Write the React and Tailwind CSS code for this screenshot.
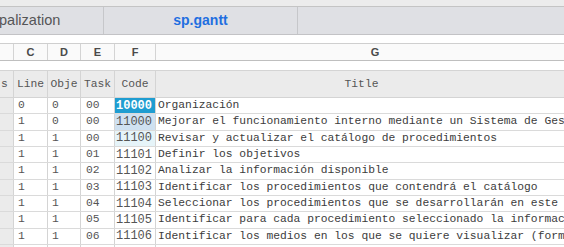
import React from "react";

const rows = [
  { l: "0", o: "0", t: "00", c: "10000", title: "Organización", hl: 1 },
  { l: "1", o: "0", t: "00", c: "11000", title: "Mejorar el funcionamiento interno mediante un Sistema de Ges", hl: 2 },
  { l: "1", o: "1", t: "00", c: "11100", title: "Revisar y actualizar el catálogo de procedimientos", hl: 3 },
  { l: "1", o: "1", t: "01", c: "11101", title: "Definir los objetivos" },
  { l: "1", o: "1", t: "02", c: "11102", title: "Analizar la información disponible" },
  { l: "1", o: "1", t: "03", c: "11103", title: "Identificar los procedimientos que contendrá el catálogo" },
  { l: "1", o: "1", t: "04", c: "11104", title: "Seleccionar los procedimientos que se desarrollarán en este" },
  { l: "1", o: "1", t: "05", c: "11105", title: "Identificar para cada procedimiento seleccionado la informac" },
  { l: "1", o: "1", t: "06", c: "11106", title: "Identificar los medios en los que se quiere visualizar (form" },
  { l: "", o: "", t: "", c: "", title: "" },
];

const mono = { fontFamily: '"Liberation Mono", "Courier New", monospace' };

function codeCls(hl) {
  if (hl === 1) return "bg-[#1f9dd1] text-white font-bold";
  if (hl === 2) return "bg-[#cfe1f1] text-[#555]";
  if (hl === 3) return "bg-[#e6f4f9] text-[#555]";
  return "bg-white text-[#555]";
}

export default function App() {
  return (
    <div
      className="w-[564px] h-[247px] overflow-hidden bg-white flex flex-col"
      style={{ fontFamily: '"Liberation Sans", Arial, sans-serif' }}
    >
      {/* top strip */}
      <div className="h-[7px] shrink-0 bg-[#ececec] border-b border-[#c4c4c4]" />
      {/* tabs */}
      <div className="h-[28px] shrink-0 flex bg-[#dfe0e4] border-b border-[#c3c3c6]">
        <div className="w-[104px] shrink-0 border-r border-[#c6c7ca] flex items-center overflow-hidden">
          <span className="text-[14.5px] text-[#555557] whitespace-nowrap ml-[-1px]">palization</span>
        </div>
        <div className="w-[194px] shrink-0 border-r border-[#c6c7ca] flex items-center justify-center">
          <span className="text-[14px] text-[#1f6fe0] font-bold">sp.gantt</span>
        </div>
        <div className="flex-1" />
      </div>
      <div className="h-[8px] shrink-0" />
      {/* column letters */}
      <div className="h-[18px] shrink-0 flex border-y border-[#cfcfcf] border-b-[#bfbfbf] bg-[#fafafa] text-[11px] font-bold text-[#4a4a4a]">
        <div className="w-[14px] shrink-0 border-r border-[#d4d4d4]" />
        <div className="w-[34px] shrink-0 border-r border-[#d4d4d4] flex items-center justify-center">C</div>
        <div className="w-[33px] shrink-0 border-r border-[#d4d4d4] flex items-center justify-center">D</div>
        <div className="w-[34px] shrink-0 border-r border-[#d4d4d4] flex items-center justify-center">E</div>
        <div className="w-[41px] shrink-0 border-r border-[#d4d4d4] flex items-center justify-center">F</div>
        <div className="w-[438px] shrink-0 flex items-center justify-center">G</div>
      </div>
      <div className="h-[9px] shrink-0" />
      {/* grid */}
      <div className="flex flex-col text-[11.3px]" style={mono}>
        <div className="h-[28px] shrink-0 flex border-y border-[#d4d4d4] bg-[#ebebeb] text-[#555]">
          <div className="w-[14px] shrink-0 border-r border-[#d4d4d4] flex items-center overflow-hidden">
            <span className="ml-[1px]">s</span>
          </div>
          <div className="w-[34px] shrink-0 border-r border-[#d4d4d4] flex items-center justify-center">Line</div>
          <div className="w-[33px] shrink-0 border-r border-[#d4d4d4] flex items-center justify-center overflow-hidden">Obje</div>
          <div className="w-[34px] shrink-0 border-r border-[#d4d4d4] flex items-center justify-center">Task</div>
          <div className="w-[41px] shrink-0 border-r border-[#d4d4d4] flex items-center justify-center">Code</div>
          <div className="w-[411px] shrink-0 flex items-center justify-center">Title</div>
        </div>
        {rows.map((r, i) => (
          <div key={i} className="h-[16.35px] shrink-0 flex border-b border-[#dadada] text-[#555] leading-none">
            <div className="w-[14px] shrink-0 border-r border-[#d4d4d4] bg-[#ebebeb]" />
            <div className="w-[34px] shrink-0 border-r border-[#d4d4d4] flex items-center pl-[4px]">{r.l}</div>
            <div className="w-[33px] shrink-0 border-r border-[#d4d4d4] flex items-center pl-[4px]">{r.o}</div>
            <div className="w-[34px] shrink-0 border-r border-[#d4d4d4] flex items-center pl-[5px]">{r.t}</div>
            <div className={"w-[41px] shrink-0 border-r border-[#d4d4d4] flex items-center pl-[1px] text-[12px] " + codeCls(r.hl)}>{r.c}</div>
            <div className="flex-1 min-w-0 flex items-center pl-[2px] whitespace-nowrap overflow-hidden text-[#3c3c3c]">{r.title}</div>
          </div>
        ))}
      </div>
    </div>
  );
}
